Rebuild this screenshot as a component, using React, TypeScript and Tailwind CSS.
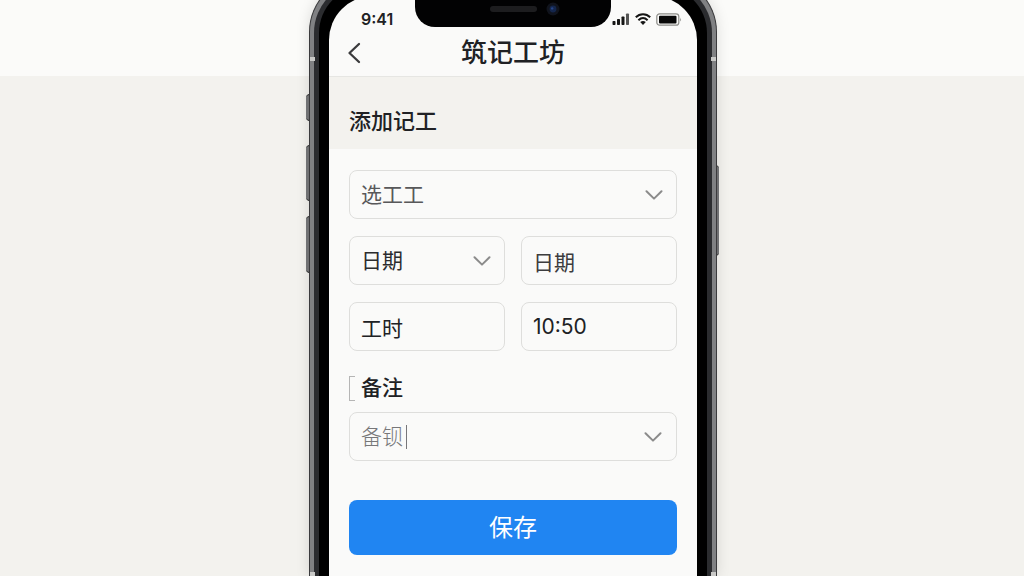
import { useState } from "react";
import type { ReactNode } from "react";

const fieldBox =
  "h-[49px] w-full rounded-lg border border-[#dededc] bg-[#fafaf9] px-[11px] text-[21px] outline-none";

function DownArrow() {
  return (
    <svg
      viewBox="0 0 18 10"
      className="pointer-events-none h-2.5 w-[18px] shrink-0"
      fill="none"
      stroke="#8b8b8b"
      strokeWidth="2"
      strokeLinecap="round"
      strokeLinejoin="round"
      aria-hidden="true"
    >
      <path d="M1.5 1.2 L9 8.6 L16.5 1.2" />
    </svg>
  );
}

function SelectField({
  label,
  options,
  className,
}: {
  label: string;
  options: string[];
  className: string;
}) {
  return (
    <div className="relative">
      <select aria-label={label} className={`${fieldBox} appearance-none ${className}`}>
        {options.map((option) => (
          <option key={option}>{option}</option>
        ))}
      </select>
      <div className="pointer-events-none absolute inset-y-0 right-[14px] flex items-center">
        <DownArrow />
      </div>
    </div>
  );
}

function StatusIcons() {
  return (
    <div className="flex items-center gap-[5px]" aria-hidden="true">
      <svg width="18" height="12" viewBox="0 0 18 12" fill="#161616">
        <rect x="0.5" y="8" width="3" height="4" rx="0.8" />
        <rect x="5" y="6" width="3" height="6" rx="0.8" />
        <rect x="9.5" y="3.5" width="3" height="8.5" rx="0.8" />
        <rect x="14" y="0.5" width="3" height="11.5" rx="0.8" fill="#555" />
      </svg>
      <svg width="16" height="12" viewBox="0 0 16 12" fill="none" stroke="#161616" strokeWidth="2">
        <path d="M0.8 4.3 C4.8 0.2 11.2 0.2 15.2 4.3" />
        <path d="M3.4 7.2 C6.2 4.6 9.8 4.6 12.6 7.2" />
        <path d="M5.2 9 Q8 6.9 10.8 9 L8 12 Z" fill="#161616" stroke="none" />
      </svg>
      <svg width="26" height="13" viewBox="0 0 26 13">
        <rect x="0.8" y="0.8" width="22" height="11.4" rx="2.8" fill="#fafaf9" stroke="#8c8c88" strokeWidth="1.2" />
        <rect x="3" y="2.8" width="17.5" height="7.6" rx="1" fill="#080808" />
        <path d="M24.2 4.4 Q25.8 6.5 24.2 8.6 Z" fill="#8c8c88" />
      </svg>
    </div>
  );
}

function Notch() {
  return (
    <div className="absolute top-0 left-1/2 flex h-[31px] w-[196px] -translate-x-1/2 justify-center rounded-b-[20px] bg-[#020203]">
      <div className="mt-[10px] h-[6px] w-[47px] rounded-full bg-[#1d1d1f]" />
      <svg className="absolute top-[6px] right-[51px]" width="14" height="14" viewBox="0 0 14 14">
        <circle cx="7" cy="7" r="6.5" fill="#10131c" />
        <circle cx="7" cy="7" r="3.4" fill="#14264d" />
        <circle cx="6.2" cy="6.4" r="1.2" fill="#27468a" />
      </svg>
    </div>
  );
}

function PhoneFrame({ children }: { children: ReactNode }) {
  return (
    <div className="relative -mt-6 flex w-full max-w-[408px] flex-col">
      {/* Side buttons */}
      <div className="absolute top-[118px] -left-[3px] h-[27px] w-1 rounded-l-sm border-y border-[#222] bg-[#77787a]" />
      <div className="absolute top-[169px] -left-[3px] h-[56px] w-1 rounded-l-sm border-y border-[#222] bg-[#77787a]" />
      <div className="absolute top-[240px] -left-[3px] h-[57px] w-1 rounded-l-sm border-y border-[#222] bg-[#77787a]" />
      <div className="absolute top-[189px] -right-[2px] h-[91px] w-1 rounded-r-sm border-y border-[#222] bg-[#77787a]" />

      <div className="relative flex grow flex-col rounded-t-[56px] border-x border-t border-[#3a3a3c] bg-[#808183] px-[4px] pt-[4px] shadow-[0_0_14px_rgba(0,0,0,0.13)]">
        {/* Antenna bands */}
        <div className="absolute top-[80px] left-0 h-1 w-[5px] bg-[#c9c9c7]" />
        <div className="absolute top-[80px] right-0 h-1 w-[5px] bg-[#c9c9c7]" />
        <div className="absolute bottom-0 left-0 h-1 w-[5px] bg-[#c9c9c7]" />
        <div className="absolute right-0 bottom-0 h-1 w-[5px] bg-[#c9c9c7]" />
        <div className="flex grow flex-col rounded-t-[52px] border-x-[5px] border-t-[5px] border-[#2b2c2f] bg-black px-[10px] pt-[10px]">
          <div className="relative flex grow flex-col overflow-hidden rounded-t-[44px] bg-[#fafaf9]">
            {children}
          </div>
        </div>
      </div>
    </div>
  );
}

export default function App() {
  const [startDate, setStartDate] = useState("日期");
  const [hours, setHours] = useState("工时");
  const [time, setTime] = useState("10:50");
  const [note, setNote] = useState("备钡");

  return (
    <div className="flex min-h-screen justify-center overflow-hidden bg-[linear-gradient(to_bottom,#fbfbf9_76px,#f3f2ee_76px)] pl-0.5 font-['Inter','Noto_Sans_CJK_SC',sans-serif] text-[#202124]">
      <PhoneFrame>
        <Notch />

        {/* Status bar */}
        <div className="flex h-[34px] items-center justify-between pt-3 pr-[15px] pl-8">
          <span className="text-base leading-5 font-semibold">9:41</span>
          <StatusIcons />
        </div>

        {/* Title bar */}
        <header className="relative flex h-[47px] items-center justify-center border-b border-[#e6e6e3]">
          <button type="button" aria-label="返回" className="absolute left-[18px] flex h-8 w-8 items-center">
            <svg width="15" height="22" viewBox="0 0 15 22" fill="none" stroke="#3b3b3d" strokeWidth="2.3" strokeLinecap="round" strokeLinejoin="round">
              <path d="M12 2 L2.5 11 L12 20" />
            </svg>
          </button>
          <h1 className="text-[26px] leading-8 font-medium">筑记工坊</h1>
        </header>

        <div className="bg-[#f3f2ee] px-5 pt-7 pb-3">
          <h2 className="text-[22px] leading-8 font-medium">添加记工</h2>
        </div>

        <form className="flex flex-col px-5 pt-[21px] pb-5" onSubmit={(e) => e.preventDefault()}>
          <div className="flex flex-col gap-[17px]">
            <SelectField label="选工工" options={["选工工"]} className="text-[#58585a]" />
            <div className="grid grid-cols-2 gap-4">
              <SelectField label="日期" options={["日期"]} className="text-[#2c2c2e]" />
              <input
                aria-label="开始日期"
                className={`${fieldBox} text-[#3c3c3e]`}
                value={startDate}
                onChange={(e) => setStartDate(e.target.value)}
              />
            </div>
            <div className="grid grid-cols-2 gap-4">
              <input
                aria-label="工时"
                className={fieldBox}
                value={hours}
                onChange={(e) => setHours(e.target.value)}
              />
              <input
                aria-label="时间"
                className={fieldBox}
                value={time}
                onChange={(e) => setTime(e.target.value)}
              />
            </div>
          </div>

          <div className="mt-[23px] mb-[10px] flex h-7 items-center gap-[6px]">
            <span className="h-[25px] w-[6px] border-y border-l border-[#b5b5b5]" />
            <label htmlFor="note" className="text-[21px] leading-7 font-medium">
              备注
            </label>
          </div>

          <div className={`${fieldBox} flex items-center justify-between pr-[14px]`}>
            <div className="flex items-center">
              <input
                id="note"
                className="w-[45px] bg-transparent font-light text-[#777779] outline-none"
                value={note}
                onChange={(e) => setNote(e.target.value)}
              />
              <span className="h-6 w-px bg-[#77777a]" />
            </div>
            <DownArrow />
          </div>

          <button
            type="submit"
            className="mt-[39px] h-[55px] w-full rounded-lg bg-[#2085f2] text-2xl text-white hover:bg-[#1877df]"
          >
            保存
          </button>
        </form>
      </PhoneFrame>
    </div>
  );
}
